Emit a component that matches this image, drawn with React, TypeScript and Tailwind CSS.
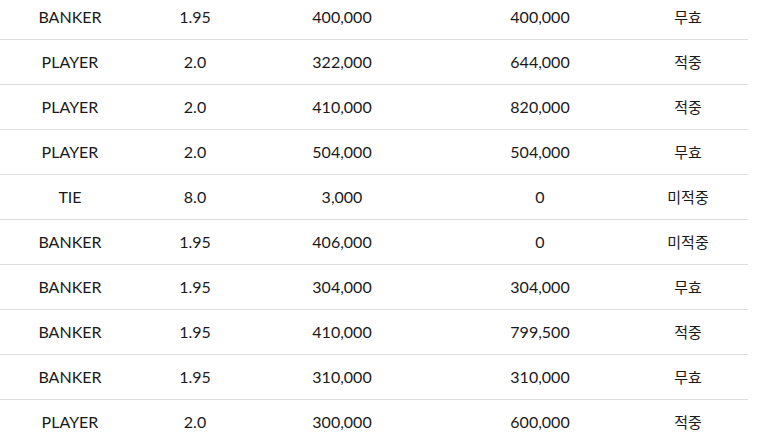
import React from 'react';

type Row = { bet: string; odds: string; amount: string; payout: string; result: string };

const rows: Row[] = [
  { bet: 'BANKER', odds: '1.95', amount: '400,000', payout: '400,000', result: '무효' },
  { bet: 'PLAYER', odds: '2.0', amount: '322,000', payout: '644,000', result: '적중' },
  { bet: 'PLAYER', odds: '2.0', amount: '410,000', payout: '820,000', result: '적중' },
  { bet: 'PLAYER', odds: '2.0', amount: '504,000', payout: '504,000', result: '무효' },
  { bet: 'TIE', odds: '8.0', amount: '3,000', payout: '0', result: '미적중' },
  { bet: 'BANKER', odds: '1.95', amount: '406,000', payout: '0', result: '미적중' },
  { bet: 'BANKER', odds: '1.95', amount: '304,000', payout: '304,000', result: '무효' },
  { bet: 'BANKER', odds: '1.95', amount: '410,000', payout: '799,500', result: '적중' },
  { bet: 'BANKER', odds: '1.95', amount: '310,000', payout: '310,000', result: '무효' },
  { bet: 'PLAYER', odds: '2.0', amount: '300,000', payout: '600,000', result: '적중' },
];

const App: React.FC = () => {
  return (
    <div className="h-[443px] overflow-hidden bg-white text-[#1a1a1a] font-['Lato','Noto_Sans_CJK_KR',sans-serif] text-[16px]">
      <div className="w-[748px] -mt-[5px]">
        {rows.map((r, i) => (
          <div
            key={i}
            className="grid grid-cols-[140px_110px_184px_212px_84px] h-[45px] items-center text-center border-b border-[#dddddd]"
          >
            <div>{r.bet}</div>
            <div>{r.odds}</div>
            <div>{r.amount}</div>
            <div>{r.payout}</div>
            <div className="font-['Noto_Sans_CJK_KR',sans-serif] text-[15px]">{r.result}</div>
          </div>
        ))}
      </div>
    </div>
  );
};

export default App;
